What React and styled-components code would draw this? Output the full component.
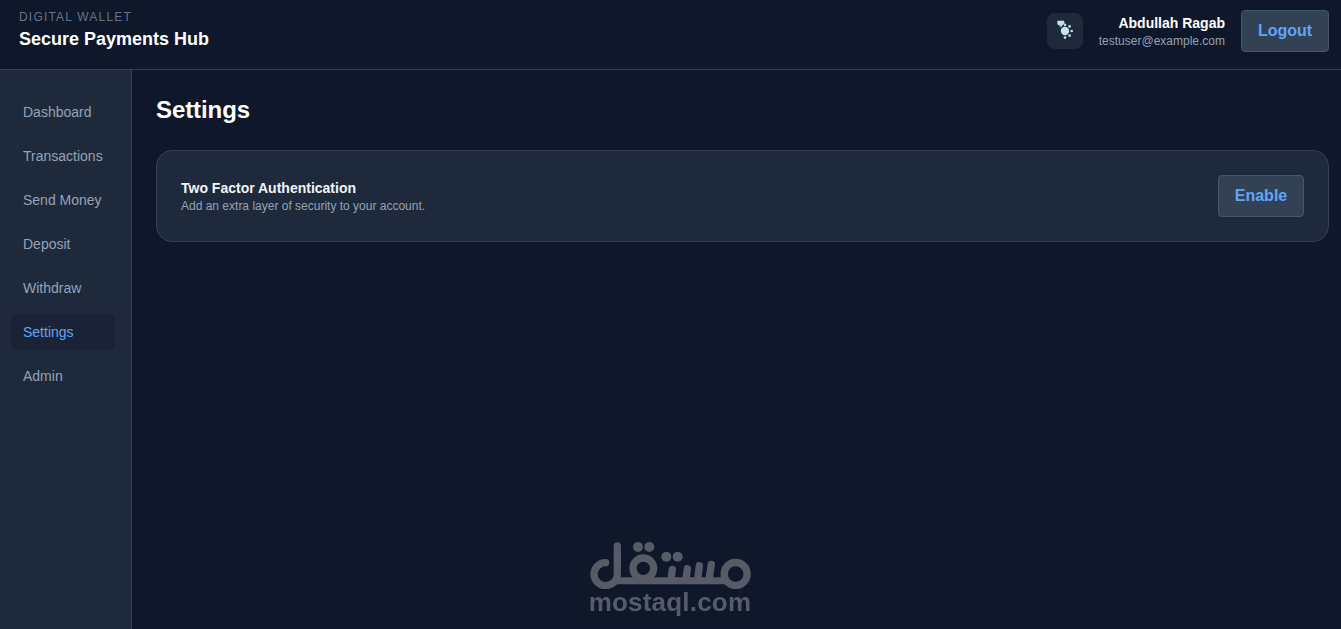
import styled, { createGlobalStyle, ThemeProvider } from "styled-components";

const theme = {
  colors: {
    background: "#0f172a",
    surface: "#1e293b",
    border: "#334155",
    control: "#334155",
    controlBorder: "#475569",
    text: "#ffffff",
    muted: "#94a3b8",
    faint: "#64748b",
    primary: "#60a5fa",
    watermark: "#565b67",
  },
};

const GlobalStyle = createGlobalStyle`
  * {
    box-sizing: border-box;
  }
  body {
    margin: 0;
    background: ${theme.colors.background};
    color: ${theme.colors.text};
    font-family: "Liberation Sans", Arial, sans-serif;
  }
  h1, h2, h3, p {
    margin: 0;
  }
`;

const Page = styled.div`
  display: flex;
  flex-direction: column;
  height: 100vh;
  overflow: hidden;
`;

const Header = styled.header`
  display: flex;
  justify-content: space-between;
  flex: none;
  height: 70px;
  padding: 9px 12px 0 19px;
  border-bottom: 1px solid ${({ theme }) => theme.colors.border};
`;

const Overline = styled.p`
  font-size: 12px;
  line-height: 16px;
  letter-spacing: 1.2px;
  color: ${({ theme }) => theme.colors.faint};
`;

const BrandName = styled.h1`
  font-size: 18px;
  line-height: 28px;
  font-weight: 700;
`;

const HeaderActions = styled.div`
  display: flex;
  align-items: center;
  height: 44px;
`;

const ThemeToggle = styled.button`
  display: flex;
  align-items: center;
  justify-content: center;
  width: 36px;
  height: 36px;
  margin-right: 15px;
  padding: 0;
  border: 0;
  border-radius: 8px;
  background: ${({ theme }) => theme.colors.surface};
`;

const UserInfo = styled.div`
  width: 127px;
  margin-right: 16px;
  text-align: right;
`;

const UserName = styled.p`
  font-size: 14px;
  line-height: 20px;
  font-weight: 700;
`;

const Caption = styled.p`
  font-size: 12px;
  line-height: 16px;
  color: ${({ theme }) => theme.colors.muted};
`;

const Button = styled.button`
  width: ${({ $width }) => $width};
  height: 42px;
  padding: 0;
  border: 1px solid ${({ theme }) => theme.colors.controlBorder};
  border-radius: 4px;
  background: ${({ theme }) => theme.colors.control};
  color: ${({ theme }) => theme.colors.primary};
  font-family: inherit;
  font-size: 16px;
  line-height: 24px;
  font-weight: 700;
`;

const Body = styled.div`
  display: flex;
  flex: 1;
`;

const Sidebar = styled.nav`
  display: flex;
  flex-direction: column;
  flex: none;
  gap: 8px;
  width: 132px;
  padding: 24px 16px 24px 11px;
  border-right: 1px solid ${({ theme }) => theme.colors.border};
  background: ${({ theme }) => theme.colors.surface};
`;

const NavLink = styled.a`
  padding: 8px 12px;
  border-radius: 4px;
  font-size: 14px;
  line-height: 20px;
  white-space: nowrap;
  background: ${({ $active }) => ($active ? "#1a2336" : "transparent")};
  color: ${({ $active, theme }) =>
    $active ? theme.colors.primary : theme.colors.muted};
`;

const Main = styled.main`
  flex: 1;
  padding: 24px 12px 24px 24px;
`;

const PageTitle = styled.h2`
  margin-bottom: 24px;
  font-size: 24px;
  line-height: 32px;
  font-weight: 700;
  letter-spacing: -0.08px;
`;

const Card = styled.section`
  display: flex;
  align-items: center;
  justify-content: space-between;
  height: 92px;
  padding: 0 24px;
  border: 1px solid ${({ theme }) => theme.colors.border};
  border-radius: 16px;
  background: ${({ theme }) => theme.colors.surface};
`;

const CardTitle = styled.h3`
  font-size: 14px;
  line-height: 20px;
  font-weight: 700;
  color: #f1f5f9;
`;

const Watermark = styled.div`
  position: fixed;
  left: 588px;
  bottom: 14px;
  display: flex;
  flex-direction: column;
  align-items: center;
  width: 164px;
  color: ${({ theme }) => theme.colors.watermark};
  pointer-events: none;

  svg {
    display: block;
  }
`;

const WatermarkText = styled.span`
  font-size: 26px;
  line-height: 26px;
  font-weight: 700;
  letter-spacing: 0.2px;
`;

const SunMoonIcon = () => (
  <svg width="22" height="22" viewBox="-1 -1 22 22">
    <path
      d="M2.9-.3h5.8q.6 0 .6.6v2.2L7.8 4.1 6.8 5.2 5 4.8 2.3 3.2V.3q0-.6.6-.6Z"
      fill="#c5e0ea"
    />
    <path d="M4.4 4.6 6.6 6.1" stroke="#8799a5" strokeWidth="1.5" />
    <circle cx="10" cy="10" r="4.2" fill="#c5e5ef" />
    <g fill="#c5dce7">
      <circle cx="10" cy="3.8" r="1.35" />
      <circle cx="14.6" cy="5.4" r="1.35" />
      <circle cx="16.7" cy="10" r="1.35" />
      <circle cx="14.6" cy="14.6" r="1.35" />
      <circle cx="10" cy="16.6" r="1.35" />
    </g>
  </svg>
);

const MostaqlMark = () => (
  <svg width="164" height="49" viewBox="54 30 492 147">
    <g
      fill="none"
      stroke="currentColor"
      strokeWidth="22"
      strokeLinecap="round"
    >
      <path d="M107 98A35 34.5 0 1 0 142 132V48" />
      <path d="M138 152H472" strokeWidth="21" strokeLinecap="butt" />
      <circle cx="497" cy="132" r="34.5" />
      <circle cx="220" cy="115" r="31" />
      <path d="M307 118 303 150M352 116 348 150M388 107 383 150M424 103 417 150" />
    </g>
    <g fill="currentColor">
      <circle cx="204" cy="51" r="15" />
      <circle cx="238" cy="51" r="15" />
      <circle cx="289" cy="80" r="15" />
      <circle cx="323" cy="80" r="15" />
    </g>
  </svg>
);

const navItems = [
  "Dashboard",
  "Transactions",
  "Send Money",
  "Deposit",
  "Withdraw",
  "Settings",
  "Admin",
];

const App = () => {
  return (
    <ThemeProvider theme={theme}>
      <GlobalStyle />
      <Page>
        <Header>
          <div>
            <Overline>DIGITAL WALLET</Overline>
            <BrandName>Secure Payments Hub</BrandName>
          </div>
          <HeaderActions>
            <ThemeToggle>
              <SunMoonIcon />
            </ThemeToggle>
            <UserInfo>
              <UserName>Abdullah Ragab</UserName>
              <Caption>testuser@example.com</Caption>
            </UserInfo>
            <Button $width="88px">Logout</Button>
          </HeaderActions>
        </Header>
        <Body>
          <Sidebar>
            {navItems.map((item) => (
              <NavLink key={item} $active={item === "Settings"}>
                {item}
              </NavLink>
            ))}
          </Sidebar>
          <Main>
            <PageTitle>Settings</PageTitle>
            <Card>
              <div>
                <CardTitle>Two Factor Authentication</CardTitle>
                <Caption>Add an extra layer of security to your account.</Caption>
              </div>
              <Button $width="86px">Enable</Button>
            </Card>
          </Main>
        </Body>
      </Page>
      <Watermark>
        <MostaqlMark />
        <WatermarkText>mostaql.com</WatermarkText>
      </Watermark>
    </ThemeProvider>
  );
};

export default App;
